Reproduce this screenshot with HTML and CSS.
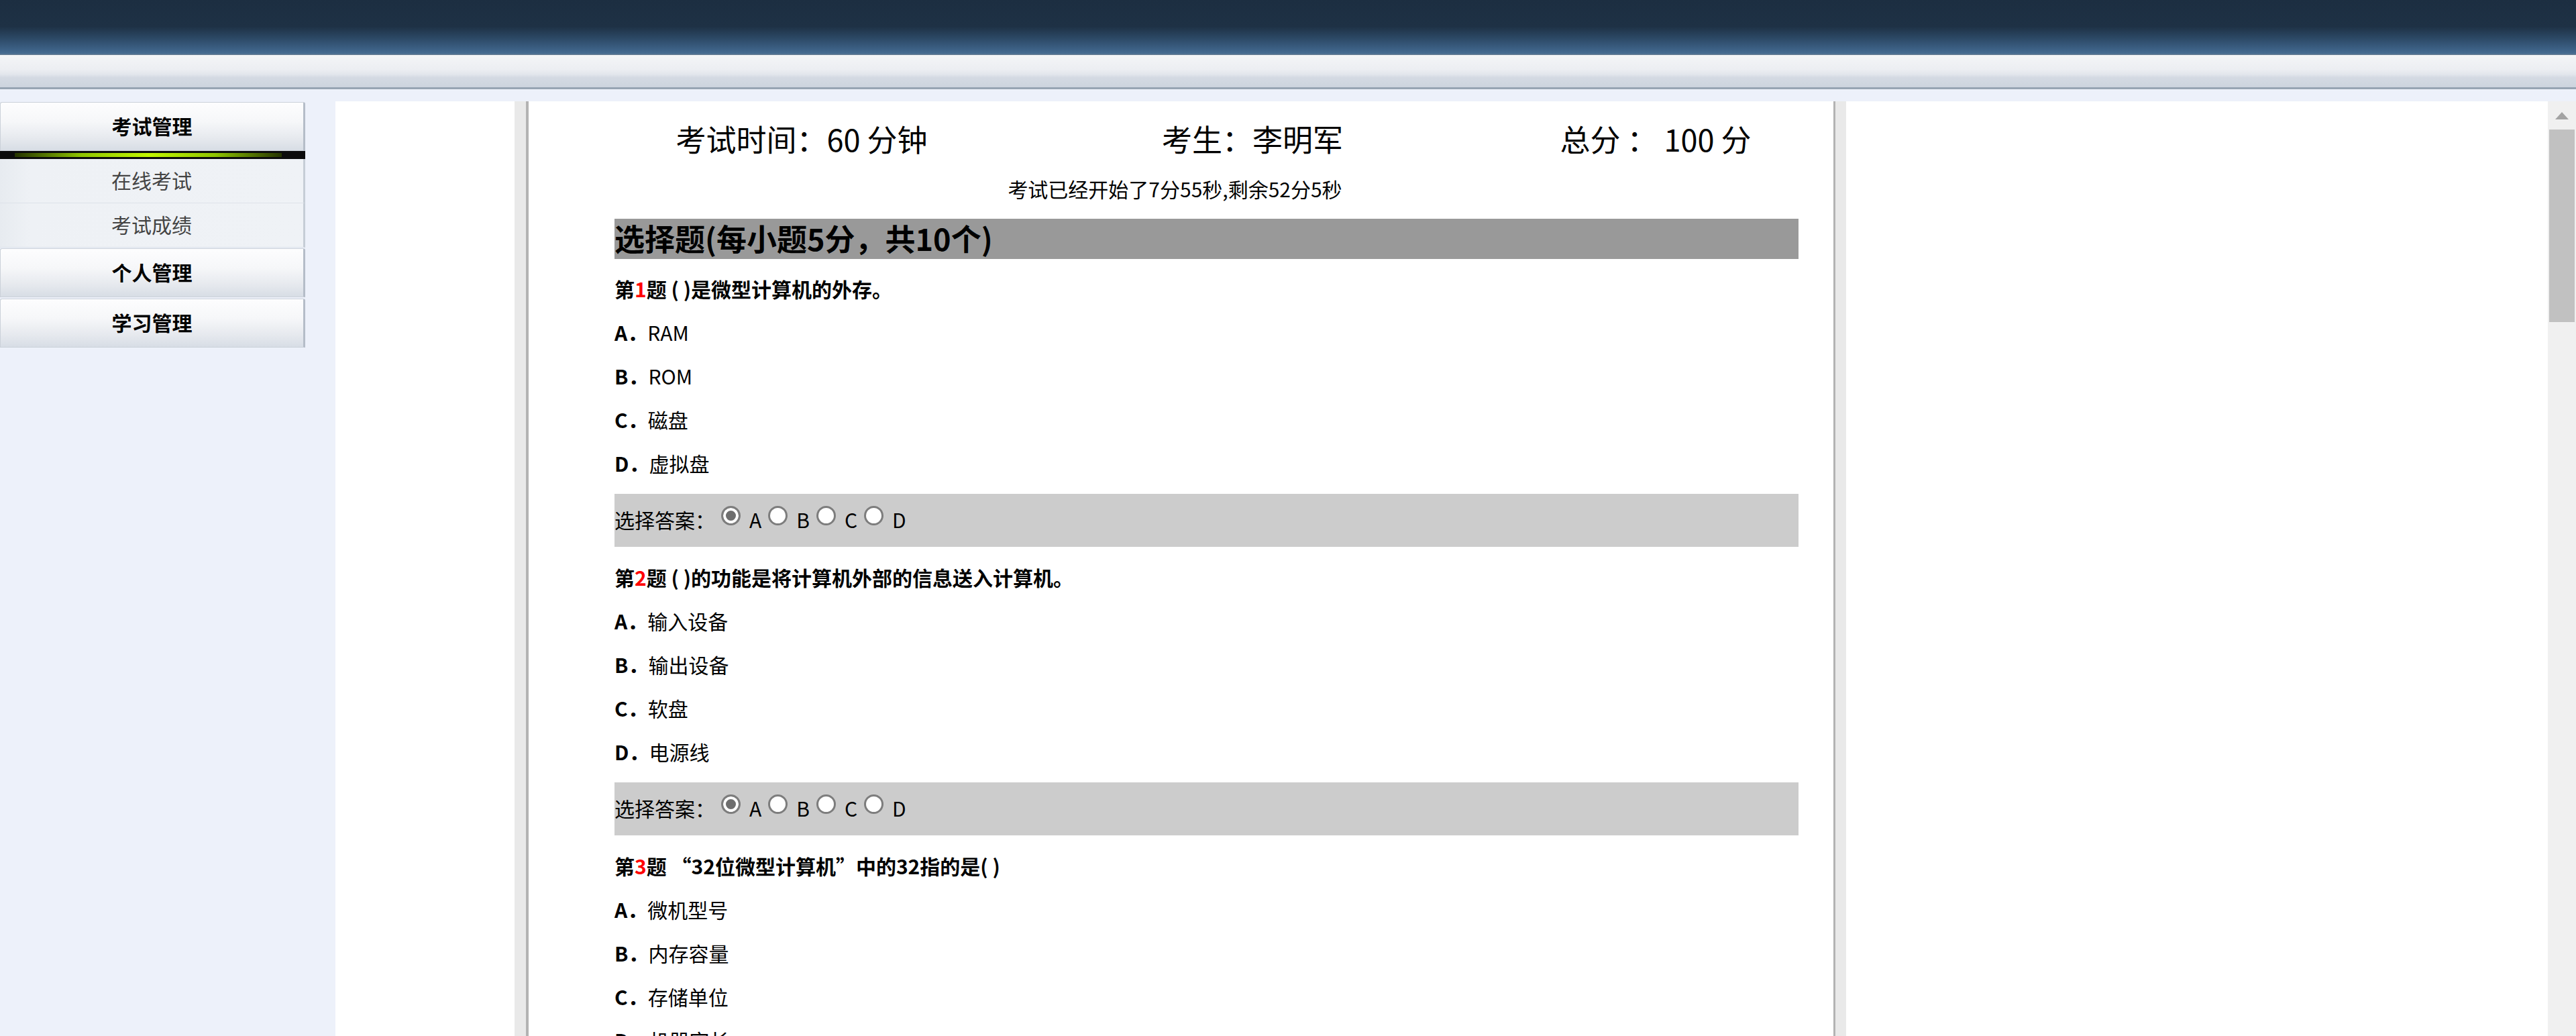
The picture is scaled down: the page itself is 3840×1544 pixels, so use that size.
FILE: index.html
```html
<!DOCTYPE html>
<html lang="zh-CN">
<head>
<meta charset="utf-8">
<title>在线考试</title>
<link rel="stylesheet" href="styles.css">
</head>
<body>
<div class="topbar"></div>
<div class="toolbar"></div>
<div class="main">
  <nav class="sidebar">
    <div class="menu-head">考试管理</div>
    <div class="menu-bar"><div class="glow"></div></div>
    <div class="menu-item">在线考试</div>
    <div class="menu-item">考试成绩</div>
    <div class="menu-head gap1">个人管理</div>
    <div class="menu-head gap2">学习管理</div>
  </nav>
  <section class="frame">
    <div class="viewport">
      <div class="paper-frame">
        <div class="paper">
          <div class="info">
            <div>考试时间：60 分钟</div>
            <div>考生：李明军</div>
            <div>总分 ： 100 分</div>
          </div>
          <div class="timer">考试已经开始了7分55秒,剩余52分5秒</div>
          <div class="exam">
            <h2 class="section-title">选择题(每小题5分，共10个)</h2>

            <div class="question first">
              <div class="q-title">第<span class="q-num">1</span>题 ( )是微型计算机的外存。</div>
              <div class="option"><b>A．</b>RAM</div>
              <div class="option"><b>B．</b>ROM</div>
              <div class="option"><b>C．</b>磁盘</div>
              <div class="option"><b>D．</b>虚拟盘</div>
              <div class="answer">选择答案：<input type="radio" class="radio" name="q1" checked>A<input type="radio" class="radio" name="q1">B<input type="radio" class="radio" name="q1">C<input type="radio" class="radio" name="q1">D</div>
            </div>

            <div class="question">
              <div class="q-title">第<span class="q-num">2</span>题 ( )的功能是将计算机外部的信息送入计算机。</div>
              <div class="option"><b>A．</b>输入设备</div>
              <div class="option"><b>B．</b>输出设备</div>
              <div class="option"><b>C．</b>软盘</div>
              <div class="option"><b>D．</b>电源线</div>
              <div class="answer">选择答案：<input type="radio" class="radio" name="q2" checked>A<input type="radio" class="radio" name="q2">B<input type="radio" class="radio" name="q2">C<input type="radio" class="radio" name="q2">D</div>
            </div>

            <div class="question">
              <div class="q-title">第<span class="q-num">3</span>题 “32位微型计算机”中的32指的是( )</div>
              <div class="option"><b>A．</b>微机型号</div>
              <div class="option"><b>B．</b>内存容量</div>
              <div class="option"><b>C．</b>存储单位</div>
              <div class="option"><b>D．</b>机器字长</div>
              <div class="answer">选择答案：<input type="radio" class="radio" name="q3" checked>A<input type="radio" class="radio" name="q3">B<input type="radio" class="radio" name="q3">C<input type="radio" class="radio" name="q3">D</div>
            </div>
          </div>
        </div>
      </div>
    </div>
    <div class="scrollbar">
      <div class="sb-arrow"></div>
      <div class="sb-thumb"></div>
    </div>
  </section>
</div>
</body>
</html>
```

FILE: styles.css
```css
* { box-sizing: border-box; }

html, body {
  margin: 0;
  height: 100%;
}

body {
  background: #edf1fa;
  font-family: "Noto Sans CJK SC", "Microsoft YaHei", sans-serif;
  color: #000;
  overflow: hidden;
  display: flex;
  flex-direction: column;
}

.topbar {
  flex: none;
  height: 82px;
  background: linear-gradient(to bottom, #1c2e41 0%, #1e3145 48%, #2b4763 68%, #3d6186 90%, #466b90 97%, #6b7f93 100%);
}

.toolbar {
  flex: none;
  height: 51px;
  background: linear-gradient(to bottom, #f4f5f7 0%, #eceef2 45%, #e2e6ec 60%, #d4dae3 70%, #cdd4de 100%);
  border-bottom: 3px solid #97a4b3;
}

.main {
  flex: 1;
  min-height: 0;
  display: flex;
  padding-top: 18px;
}

/* ---------- sidebar ---------- */
.sidebar {
  flex: none;
  width: 455px;
  margin-top: 1px;
}

.menu-head {
  height: 73px;
  line-height: 69px;
  text-align: center;
  font-size: 30px;
  font-weight: bold;
  color: #000;
  background: linear-gradient(to bottom, #fdfdfe 0%, #f6f7f9 40%, #e6e9ee 75%, #d7dde5 100%);
  border: 1px solid #cbd1d9;
  border-right: 3px solid #b5bdc8;
  border-radius: 3px 3px 0 0;
}

.menu-head.gap1 { margin-top: 1px; }
.menu-head.gap2 { margin-top: 2px; }

.menu-bar {
  height: 12px;
  background: #0b0b0b;
  padding: 3px 35px 3px 22px;
}

.menu-bar .glow {
  height: 6px;
  background: linear-gradient(to right, #243300 0%, #8fc400 25%, #c2f700 50%, #8fc400 75%, #243300 100%);
}

.menu-item {
  height: 66px;
  line-height: 63px;
  text-align: center;
  font-size: 30px;
  color: #444;
  background: linear-gradient(to right, #e7ebf0 0%, #eef1f5 10%, #eff2f6 100%);
  border-bottom: 1px solid #dde2e9;
  border-right: 3px solid #c6cdd6;
}

/* ---------- content frame ---------- */
.frame {
  flex: 1;
  min-width: 0;
  margin-left: 45px;
  background: #fff;
  display: flex;
  overflow: hidden;
}

.viewport {
  flex: 1;
  min-width: 0;
  overflow: hidden;
}

.scrollbar {
  flex: none;
  width: 42px;
  background: #f0f0f0;
  display: flex;
  flex-direction: column;
  align-items: center;
}

.sb-arrow {
  margin-top: 16px;
  width: 0;
  height: 0;
  border-left: 10px solid transparent;
  border-right: 10px solid transparent;
  border-bottom: 11px solid #a3a3a3;
}

.sb-thumb {
  margin-top: 15px;
  width: 38px;
  height: 287px;
  background: #c1c1c1;
}

/* ---------- paper ---------- */
.paper-frame {
  width: 1985px;
  margin-left: 267px;
  padding: 0 16px 0 17px;
  background: #e9e9e9;
  min-height: 100%;
}

.paper {
  background: #fff;
  border-left: 4px solid #b3b3b3;
  border-right: 3px solid #b3b3b3;
  padding-top: 21px;
  min-height: 1400px;
}

.info {
  display: grid;
  grid-template-columns: 672px 672px 530px;
  margin-left: 71px;
  font-size: 45px;
  line-height: 70px;
  text-align: center;
  white-space: nowrap;
}

.timer {
  margin-top: 14px;
  padding-right: 18px;
  font-size: 30px;
  line-height: 50px;
  text-align: center;
}

.exam {
  margin-top: 20px;
  padding: 0 52px 0 128px;
}

.section-title {
  margin: 0;
  height: 60px;
  background: #999;
  font-size: 45px;
  font-weight: bold;
  line-height: 58px;
  white-space: nowrap;
}

.question.first { margin-top: 14px; }

.q-title {
  font-size: 30px;
  font-weight: bold;
  line-height: 65px;
  padding-bottom: 2px;
  height: 65px;
  line-height: 61px;
  white-space: nowrap;
}

.q-num { color: #f00; }

.option {
  font-size: 30px;
  height: 65px;
  line-height: 61px;
}

.option b { font-weight: bold; }

.answer {
  margin: 11px 0 15px;
  height: 79px;
  background: #ccc;
  font-size: 30px;
  line-height: 77px;
  white-space: nowrap;
}

.radio {
  -webkit-appearance: none;
  appearance: none;
  width: 29px;
  height: 29px;
  margin: 0 13px 0 10px;
  border: 3px solid #7d7d7d;
  border-radius: 50%;
  background: #fff;
  vertical-align: 4px;
}

.radio:first-child { margin-left: 9px; }

.radio:checked {
  background: #6e6e6e;
  box-shadow: inset 0 0 0 4px #fff;
}
```
